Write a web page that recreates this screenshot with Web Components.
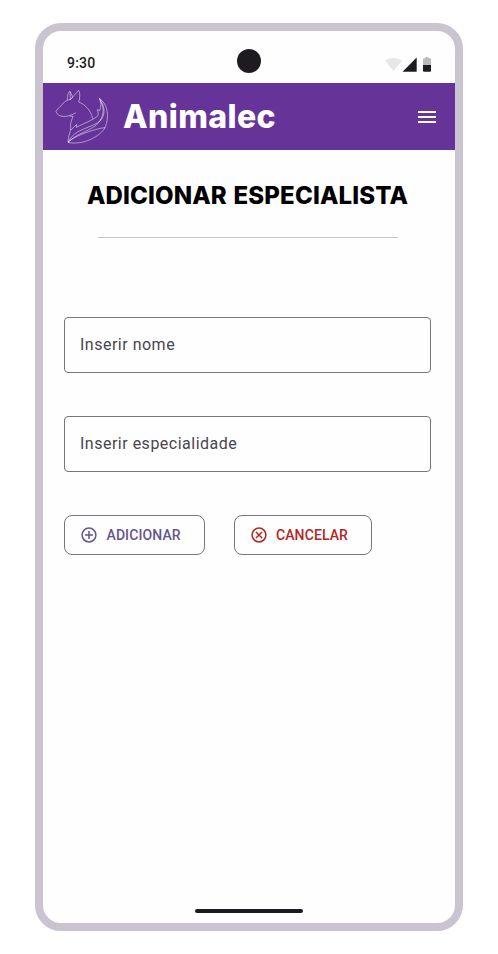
<!DOCTYPE html>
<html lang="pt">
<head>
<meta charset="utf-8">
<title>Animalec</title>
<style>
html, body { margin: 0; background: #fff; }
body { padding: 23px 35px; font-family: Roboto, "Liberation Sans", sans-serif; }
</style>
</head>
<body>
<phone-frame>
  <status-bar></status-bar>
  <app-header>Animalec</app-header>
  <specialist-form heading="ADICIONAR ESPECIALISTA">
    <outlined-field>Inserir nome</outlined-field>
    <outlined-field>Inserir especialidade</outlined-field>
    <outlined-button slot="actions" icon="add" style="--fg:#65558f;--w:141px;--gap:8.5px">ADICIONAR</outlined-button>
    <outlined-button slot="actions" icon="cancel" style="--fg:#b3261e;--w:138px">CANCELAR</outlined-button>
  </specialist-form>
  <gesture-bar></gesture-bar>
</phone-frame>
<script>
const define = (name, render) => customElements.define(name, class extends HTMLElement {
  constructor() { super(); this.attachShadow({ mode: 'open' }); }
  connectedCallback() { this.shadowRoot.innerHTML = render(this); }
});

define('phone-frame', () => `
<style>
:host { display: flex; flex-direction: column; box-sizing: border-box; width: 428px; height: 908px;
  border: 8px solid #cac4d0; border-radius: 26px; background: #fefefe; overflow: hidden; }
</style><slot></slot>`);

define('status-bar', () => `
<style>
:host { display: grid; grid-template-columns: 1fr 24px 1fr; align-items: end; box-sizing: border-box;
  height: 52px; flex: none; padding: 0 24px 10px; }
span { font: 500 14px/20px Roboto, sans-serif; letter-spacing: .2px; color: #1d1b20; }
i { width: 24px; height: 24px; border-radius: 50%; background: #1d1b20; }
svg { display: block; justify-self: end; width: 46px; height: 17px; }
</style>
<span>9:30</span><i></i>
<svg viewBox="0 0 46 17">
  <path d="M0 3.8Q8.500-2.400 17 3.800L8.500 14Z" transform="translate(0 1)" fill="#e8e7e8"/>
  <path d="M17.500 15.800L31.700 1.600V15.800Z" fill="#1d1b20"/>
  <path d="M38 3.200q0-1 1-1h1.500V1h3v1.200h1.500q1 0 1 1V9h-8Z" fill="#bbbabc"/>
  <path d="M38 9h8v5.800q0 1-1 1h-6q-1 0-1-1Z" fill="#1d1b20"/>
</svg>`);

define('fox-logo', () => `
<style>:host { display: block; width: 70px; height: 66px; } svg { display: block; }</style>
<svg width="70" height="66" viewBox="0 0 210 198" fill="none" stroke="#fff" stroke-opacity=".64" stroke-width="2.300" stroke-linejoin="round">
  <path d="M58 49C57 37 61 24 66 22L74 39M66 22L67 47L92 19C97 29 96 42 92 54C108 60 128 76 134 104"/>
  <path d="M58 49L50 53C43 64 28 72 24 83C27 92 34 95 42 97C52 99 70 95 84 86"/>
  <path d="M58 49C62 46 69 48 74 40M65 96L75 97C71 110 66 116 68 130C69 143 60 155 60 174"/>
  <path d="M69 138L86 121L85 130C106 119 133 109 148 97C154 91 149 84 148 77L155 80C160 67 160 53 154 43"/>
  <path d="M154 43C180 61 185 98 171 131C157 157 105 185 60 175"/>
  <path d="M154 43C170 67 174 89 158 109C137 132 78 132 60 175"/>
  <path d="M156 48C174 79 164 105 144 124C118 143 84 150 60 175M171 131C151 132 80 153 60 175"/>
</svg>`);

define('app-header', () => `
<style>
:host { display: flex; align-items: center; box-sizing: border-box; height: 67px; flex: none;
  padding: 0 19px 0 5px; background: #663399; color: #fff; }
b { flex: 1; margin-left: 5px; font: 800 32px/40px Inter, sans-serif; letter-spacing: .4px; }
.menu { display: grid; gap: 3px; width: 18px; }
.menu i { height: 2px; background: #fff; }
</style>
<fox-logo></fox-logo><b><slot></slot></b><span class="menu"><i></i><i></i><i></i></span>`);

define('specialist-form', el => `
<style>
:host { display: flex; flex-direction: column; flex: 1; padding: 30px 24px 0 21px; }
h1 { margin: 0; text-align: center; white-space: nowrap; font: 800 24px/32px Inter, sans-serif;
  letter-spacing: .14px; word-spacing: 1.300px; color: #000; }
hr { width: 300px; height: 1px; border: 0; margin: 25px auto 79px 34px; background: #c6c6ca; }
.fields { display: grid; gap: 43px; }
.actions { display: flex; gap: 29px; margin-top: 43px; }
</style>
<h1>${el.getAttribute('heading')}</h1><hr>
<div class="fields"><slot></slot></div>
<div class="actions"><slot name="actions"></slot></div>`);

define('outlined-field', () => `
<style>
:host { display: flex; align-items: center; box-sizing: border-box; height: 56px; padding: 0 15px;
  border: 1px solid #79747e; border-radius: 4px; color: #49454f; font: 400 16px/24px Roboto, sans-serif; letter-spacing: .5px; }
</style><slot></slot>`);

const glyphs = { add: 'M9 5v8M5 9h8', cancel: 'M6 6l6 6M12 6l-6 6' };
define('outlined-button', el => `
<style>
:host { display: flex; align-items: center; gap: var(--gap, 8px); box-sizing: border-box; width: var(--w); height: 40px;
  padding: 0 15px; border: 1px solid #79747e; border-radius: 8px; color: var(--fg);
  font: 500 14px/20px Roboto, sans-serif; letter-spacing: .1px; }
svg { display: block; flex: none; }
</style>
<svg width="18" height="18" viewBox="0 0 18 18" fill="none" stroke="currentColor" stroke-width="1.500">
  <circle cx="9" cy="9" r="6.900"/><path d="${glyphs[el.getAttribute('icon')]}"/>
</svg><slot></slot>`);

define('gesture-bar', () => `
<style>
:host { display: flex; justify-content: center; flex: none; height: 14px; }
i { width: 108px; height: 4px; border-radius: 2px; background: #1d1b20; }
</style><i></i>`);
</script>
</body>
</html>
